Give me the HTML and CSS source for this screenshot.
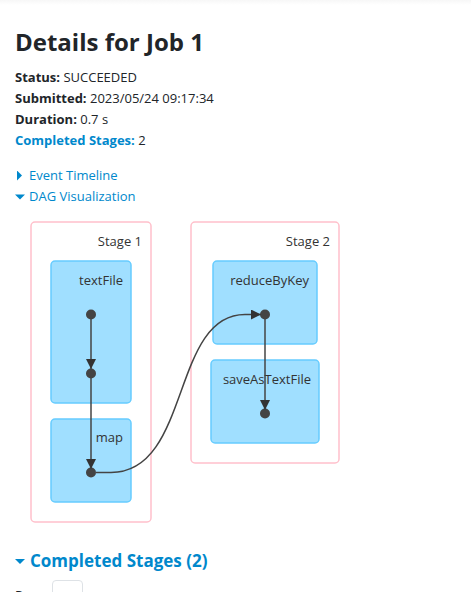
FILE: index.html
```html
<!DOCTYPE html>
<html lang="en">
<head>
<meta charset="utf-8">
<title>Details for Job 1</title>
<link rel="stylesheet" href="styles.css">
</head>
<body>
<main class="page">
  <h3 class="title">Details for Job 1</h3>
  <ul class="summary">
    <li><strong>Status:</strong> SUCCEEDED</li>
    <li><strong>Submitted:</strong> 2023/05/24 09:17:34</li>
    <li><strong>Duration:</strong> 0.7 s</li>
    <li><a href="#completed"><strong>Completed Stages:</strong></a> 2</li>
  </ul>
  <nav class="toggles">
    <a class="toggle" href="#timeline"><span class="arrow arrow-closed"></span>Event Timeline</a>
    <a class="toggle" href="#dag"><span class="arrow arrow-open"></span>DAG Visualization</a>
  </nav>
  <svg class="dag" id="dag" width="330" height="320" viewBox="15 212 330 320" role="img" aria-label="DAG Visualization">
    <defs>
      <marker id="head" viewBox="0 0 10 10" refX="10" refY="5" markerWidth="10" markerHeight="10" markerUnits="userSpaceOnUse" orient="auto">
        <path class="head" d="M0 0L10 5L0 10z"/>
      </marker>
    </defs>
    <rect class="stage" x="31" y="222" width="120" height="300" rx="4"/>
    <rect class="stage" x="191" y="222" width="148" height="241" rx="4"/>
    <rect class="op" x="51" y="261" width="80" height="142" rx="4"/>
    <rect class="op" x="51" y="419" width="80" height="83" rx="4"/>
    <rect class="op" x="213" y="261" width="104" height="83" rx="4"/>
    <rect class="op" x="211" y="360" width="108" height="83" rx="4"/>
    <g class="label">
      <text x="142" y="246">Stage 1</text>
      <text x="330" y="246">Stage 2</text>
      <text x="123" y="285">textFile</text>
      <text x="123" y="442">map</text>
      <text x="309" y="285">reduceByKey</text>
      <text x="311" y="384">saveAsTextFile</text>
    </g>
    <g class="node">
      <circle cx="91" cy="314.500" r="5"/>
      <circle cx="91" cy="373.500" r="5"/>
      <circle cx="91" cy="472.500" r="5"/>
      <circle cx="265" cy="314.500" r="5"/>
      <circle cx="265" cy="413.500" r="5"/>
    </g>
    <g class="edge" marker-end="url(#head)">
      <path d="M91 319V369" marker-end="url(#head)"/>
      <path d="M91 378V469" marker-end="url(#head)"/>
      <path d="M265 319V410" marker-end="url(#head)"/>
      <path d="M96 472.500H111C191 472.500 171 314.500 245 314.500H261" marker-end="url(#head)"/>
    </g>
  </svg>
  <h4 class="section" id="completed"><a class="toggle" href="#completed"><span class="arrow arrow-open"></span>Completed Stages (2)</a></h4>
  <form class="pager">
    <label for="page-number">Page:</label>
    <input id="page-number" type="text">
  </form>
</main>
</body>
</html>
```
FILE: styles.css
```css
* { box-sizing: border-box; }
html { overflow: hidden; }
body {
  margin: 0;
  background: #fff linear-gradient(#f7f7f7, #fff) no-repeat top / 100% 5px;
  color: #212529;
  font: 13px/21px "Open Sans", "Noto Sans", sans-serif;
}
.page { padding: 27px 15px 0; }
.title {
  margin: 0 0 10px;
  font-size: 24px;
  line-height: 30px;
  font-weight: 700;
}
.summary {
  margin: 0 0 14px;
  padding: 0;
  list-style: none;
}
a { color: #0088cc; text-decoration: none; }
.toggles { display: flex; flex-direction: column; align-items: flex-start; }
.toggle { display: flex; align-items: center; gap: 4px; }
.arrow { width: 10px; height: 10px; background: currentColor; }
.arrow-closed { clip-path: polygon(20% 0, 70% 50%, 20% 100%); }
.arrow-open { clip-path: polygon(0 30%, 100% 30%, 50% 80%); }
.dag { display: block; margin-top: 5px; }
.stage { fill: #fff; stroke: #ffc0cb; stroke-width: 1.5; }
.op { fill: #a0dfff; stroke: #66ccff; stroke-width: 1.5; }
.label { fill: #333; text-anchor: end; }
.node, .head { fill: #444; }
.head { fill: #333; }
.edge path { fill: none; stroke: #444; stroke-width: 1.5; }
.section { margin: 18px 0 8px; font-size: 17px; line-height: 22px; }
.section .toggle { gap: 5px; }
.pager { display: flex; align-items: center; gap: 4px; }
.pager input {
  width: 31px;
  height: 30px;
  border: 1px solid #dee2e6;
  border-radius: 4px;
  font: inherit;
}
```
